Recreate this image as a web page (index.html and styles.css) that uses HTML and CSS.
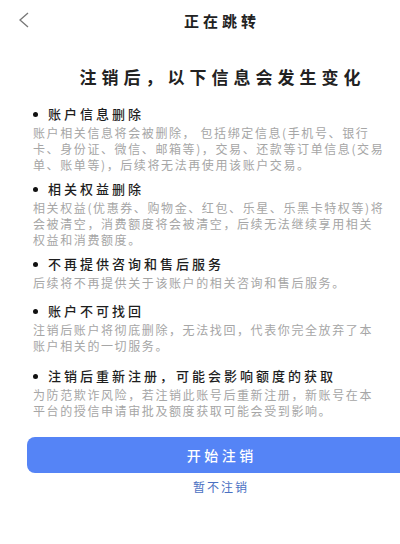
FILE: index.html
```html
<!DOCTYPE html>
<html lang="zh-CN">
<head>
<meta charset="utf-8">
<title>正在跳转</title>
<link rel="stylesheet" href="styles.css">
</head>
<body>
<div class="page">
  <header class="nav">
    <span class="back">
      <svg width="12" height="16" viewBox="0 0 12 16"><path d="M10 1 L2 8 L10 15" fill="none" stroke="#777" stroke-width="1.3"/></svg>
    </span>
    <h1 class="nav-title">正在跳转</h1>
  </header>

  <h2 class="headline">注销后，以下信息会发生变化</h2>

  <section class="item item-first">
    <h3 class="item-title"><span class="dot"></span>账户信息删除</h3>
    <p class="item-body">
      <span class="ln">账户相关信息将会被删除， 包括绑定信息(手机号、银行</span>
      <span class="ln">卡、身份证、微信、邮箱等)，交易、还款等订单信息(交易</span>
      <span class="ln">单、账单等)，后续将无法再使用该账户交易。</span>
    </p>
  </section>

  <section class="item">
    <h3 class="item-title"><span class="dot"></span>相关权益删除</h3>
    <p class="item-body">
      <span class="ln">相关权益(优惠券、购物金、红包、乐星、乐黑卡特权等)将</span>
      <span class="ln">会被清空，消费额度将会被清空，后续无法继续享用相关</span>
      <span class="ln">权益和消费额度。</span>
    </p>
  </section>

  <section class="item">
    <h3 class="item-title"><span class="dot"></span>不再提供咨询和售后服务</h3>
    <p class="item-body">
      <span class="ln">后续将不再提供关于该账户的相关咨询和售后服务。</span>
    </p>
  </section>

  <section class="item item-loose">
    <h3 class="item-title"><span class="dot"></span>账户不可找回</h3>
    <p class="item-body">
      <span class="ln">注销后账户将彻底删除，无法找回，代表你完全放弃了本</span>
      <span class="ln">账户相关的一切服务。</span>
    </p>
  </section>

  <section class="item item-looser">
    <h3 class="item-title"><span class="dot"></span>注销后重新注册，可能会影响额度的获取</h3>
    <p class="item-body">
      <span class="ln">为防范欺诈风险，若注销此账号后重新注册，新账号在本</span>
      <span class="ln">平台的授信申请审批及额度获取可能会受到影响。</span>
    </p>
  </section>

  <div class="actions">
    <button class="btn-primary">开始注销</button>
    <a class="btn-link">暂不注销</a>
  </div>
</div>
</body>
</html>
```

FILE: styles.css
```css
html, body {
  margin: 0;
  padding: 0;
  background: #fff;
  overflow: hidden;
  width: 400px;
  height: 544px;
}
.page {
  width: 440px;
  font-family: "Noto Sans CJK SC", "Noto Sans", sans-serif;
  color: #222;
}
.nav {
  height: 42px;
  display: flex;
  align-items: center;
  justify-content: center;
  position: relative;
}
.back {
  position: absolute;
  left: 18px;
  top: 12px;
  width: 12px;
  height: 16px;
  display: flex;
}
.nav-title {
  margin: 0;
  font-size: 15px;
  font-weight: 700;
  letter-spacing: 4px;
  line-height: 20px;
  padding-left: 4px;
  margin-top: -1px;
}
.headline {
  margin: 23px 0 0;
  text-align: center;
  font-size: 17px;
  font-weight: 700;
  letter-spacing: 5px;
  line-height: 24px;
  padding-left: 5px;
}
.item {
  padding-left: 33px;
  margin-top: 5px;
}
.item-first {
  margin-top: 14px;
}
.item-loose {
  margin-top: 9px;
}
.item-looser {
  margin-top: 11px;
}
.item-title {
  margin: 0;
  display: flex;
  align-items: center;
  font-size: 13px;
  font-weight: 500;
  letter-spacing: 3px;
  line-height: 22px;
  color: #1e1e1e;
}
.dot {
  width: 5px;
  height: 5px;
  border-radius: 50%;
  background: #111;
  margin-right: 10px;
}
.item-body {
  margin: 0;
  font-size: 12px;
  line-height: 16px;
  letter-spacing: 1.6px;
  color: #a6a6a6;
}
.ln {
  display: block;
  white-space: nowrap;
}
.actions {
  margin-top: 18px;
  display: flex;
  flex-direction: column;
  align-items: center;
}
.btn-primary {
  width: 386px;
  height: 36px;
  border: none;
  border-radius: 8px;
  background: #5584f6;
  color: #fff;
  font-family: "Noto Sans CJK SC", "Noto Sans", sans-serif;
  font-size: 14px;
  font-weight: 500;
  letter-spacing: 3.5px;
  padding: 0 0 0 3.5px;
}
.btn-link {
  margin-top: 6px;
  font-size: 12px;
  letter-spacing: 2px;
  padding-left: 2px;
  color: #4a70c2;
  line-height: 16px;
}
```
